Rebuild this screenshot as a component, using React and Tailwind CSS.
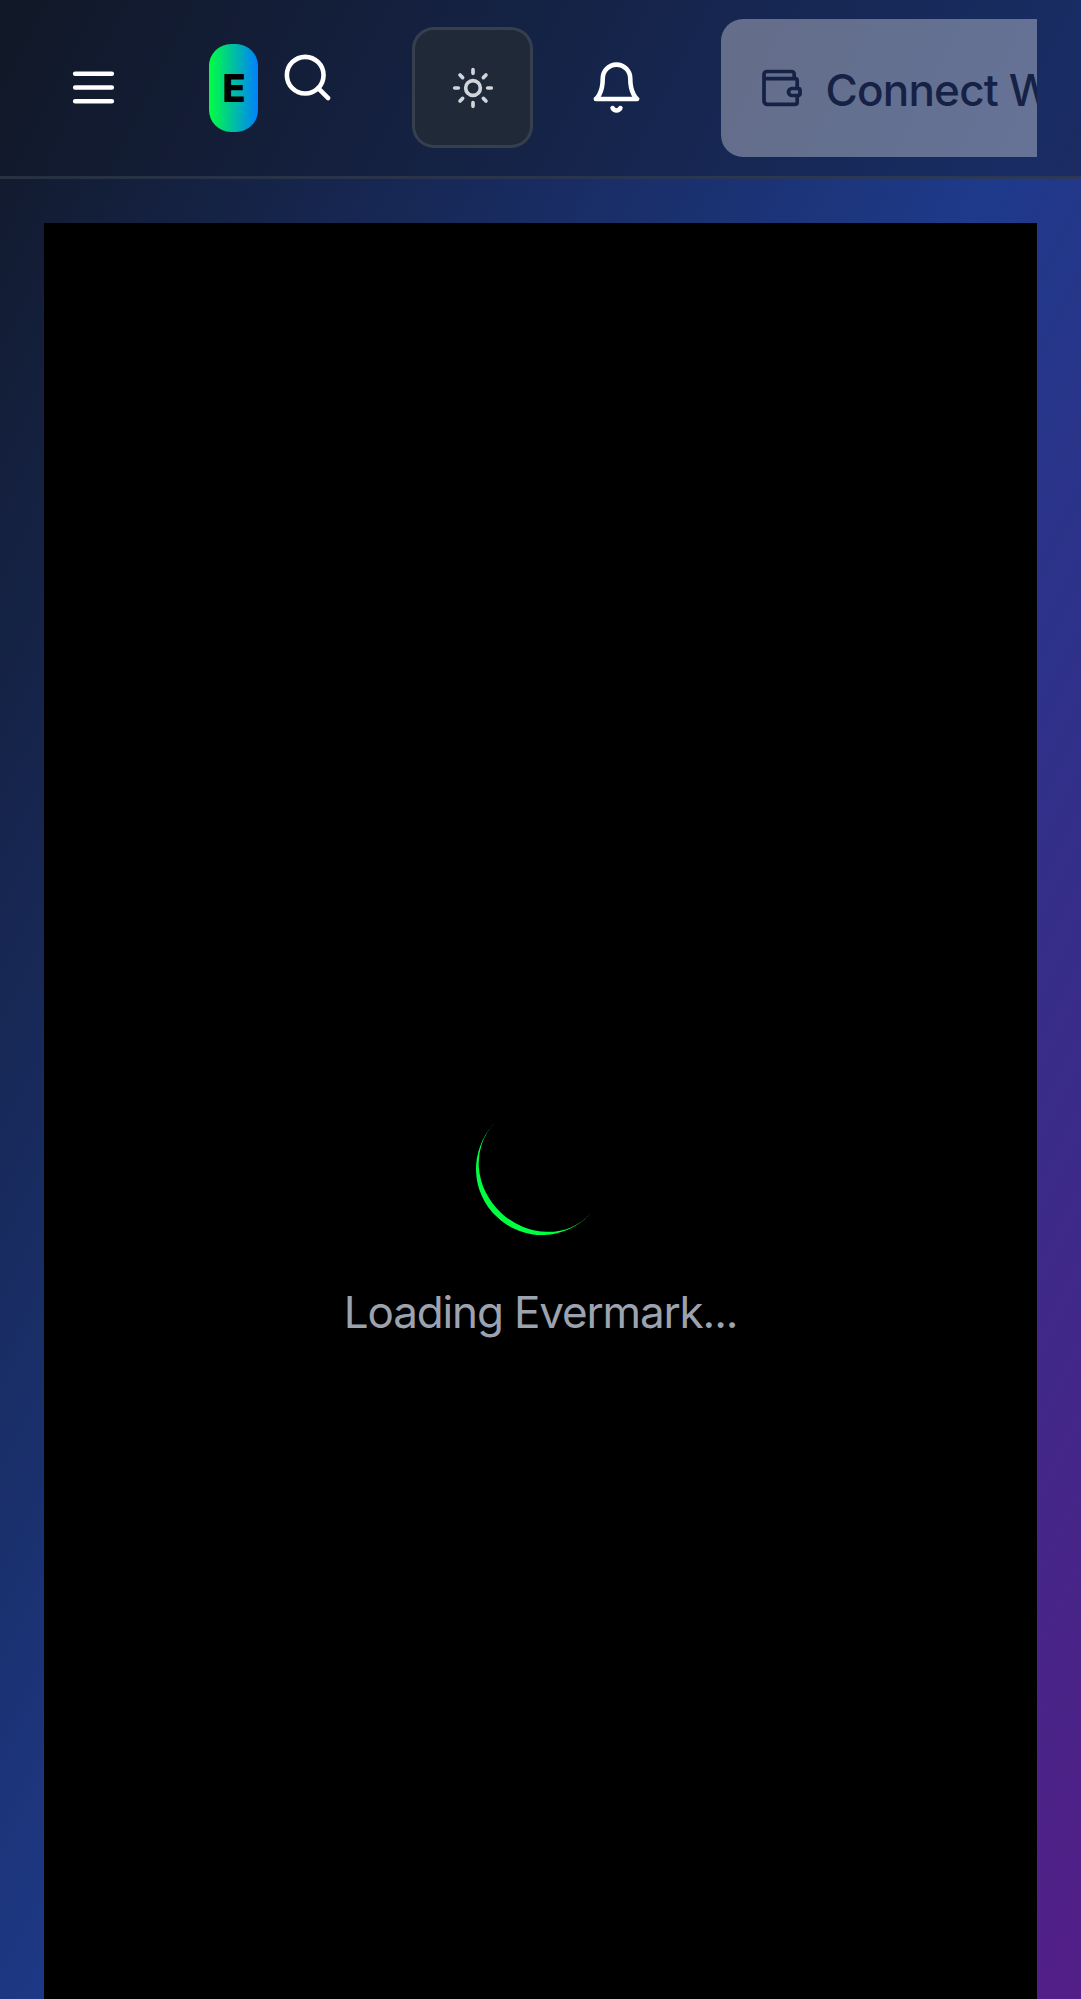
function Icon({ className, children }) {
  return (
    <svg
      viewBox="0 0 24 24"
      fill="none"
      stroke="currentColor"
      strokeWidth="2"
      strokeLinecap="round"
      strokeLinejoin="round"
      className={className}
    >
      {children}
    </svg>
  );
}

function WalletIcon() {
  return (
    <svg
      viewBox="0 0 44 44"
      fill="none"
      stroke="currentColor"
      strokeWidth="3.7"
      strokeLinecap="round"
      strokeLinejoin="round"
      className="size-11 shrink-0"
    >
      <path d="M35.200 12.500V8a2.500 2.500 0 0 0-2.500-2.500H8A3 3 0 0 0 5 8.500V35a3.300 3.300 0 0 0 3.300 3.300h27.900a2 2 0 0 0 2-2V29.500M38.200 22.500v-7.800a2 2 0 0 0-2-2H5.500" />
      <path d="M33 22.500h6.500a1.500 1.500 0 0 1 1.500 1.500v4a1.500 1.500 0 0 1-1.500 1.500H33a3.500 3.500 0 0 1 0-7z" />
    </svg>
  );
}

function Header() {
  return (
    <header className="h-[179px] w-full shrink-0 border-b-[3px] border-[#374151]/60 bg-[#111827]/40 pl-11 pr-[44px]">
      <div className="flex h-full items-center overflow-hidden">
        <button className="mb-px ml-[22px] shrink-0 text-white" aria-label="Menu">
          <Icon className="size-[55px]">
            <path d="M4 6h16M4 12h16M4 18h16" />
          </Icon>
        </button>
        <div className="ml-22 flex h-22 w-[49px] shrink-0 items-center justify-center rounded-[22px] bg-[linear-gradient(to_right,#00ff41,#0080ff)]">
          <span className="pl-px pt-px text-[38.5px] font-extrabold leading-none text-black">E</span>
        </div>
        <button className="mb-[22px] ml-[22px] shrink-0 text-white" aria-label="Search">
          <Icon className="size-[55px]">
            <circle cx="11" cy="11" r="8" />
            <path d="m21 21-4.35-4.35" />
          </Icon>
        </button>
        <button
          className="mb-px ml-[77px] flex size-[121px] shrink-0 items-center justify-center rounded-[22px] border-[3px] border-[#374151]/90 bg-[#1f2937] text-[#d1d5db]"
          aria-label="Theme"
        >
          <Icon className="size-11">
            <circle cx="12" cy="12" r="4" />
            <path d="M12 2v2M12 20v2M4.93 4.93l1.41 1.41M17.66 17.66l1.41 1.41M2 12h2M20 12h2M6.34 17.66l-1.41 1.41M19.07 4.93l-1.41 1.41" />
          </Icon>
        </button>
        <button className="mb-px ml-[55.5px] shrink-0 text-white" aria-label="Notifications">
          <Icon className="size-[55px]">
            <path d="M6 8a6 6 0 0 1 12 0c0 7 3 9 3 9H3s3-2 3-9" />
            <path d="M10.3 21a1.94 1.94 0 0 0 3.4 0" />
          </Icon>
        </button>
        <button className="ml-[77px] flex h-[138px] w-[440px] shrink-0 items-center rounded-[22px] bg-[#eeeef0]/36 pl-[38px] text-[#152145]">
          <WalletIcon />
          <span className="ml-[23px] mt-[3px] whitespace-nowrap text-[44px] font-medium leading-none tracking-[-0.8px]">
            Connect Wallet
          </span>
        </button>
      </div>
    </header>
  );
}

export default function App() {
  return (
    <div className="flex h-[1999px] w-[1081px] flex-col overflow-hidden bg-[linear-gradient(to_bottom_right,#111827,#1e3a8a,#581c87)] bg-[length:100%_2178px] bg-no-repeat font-['Inter',sans-serif]">
      <Header />
      <main className="mx-11 mt-11 flex grow flex-col items-center bg-black">
        <div className="ml-[2px] mt-[880px] size-[132px] rotate-[43deg] rounded-full border-b-[6px] border-[#00ff41]" />
        <p className="mt-11 text-[44px] leading-[66px] tracking-[-1.15px] text-[#9ca3af]">
          Loading Evermark...
        </p>
      </main>
    </div>
  );
}
